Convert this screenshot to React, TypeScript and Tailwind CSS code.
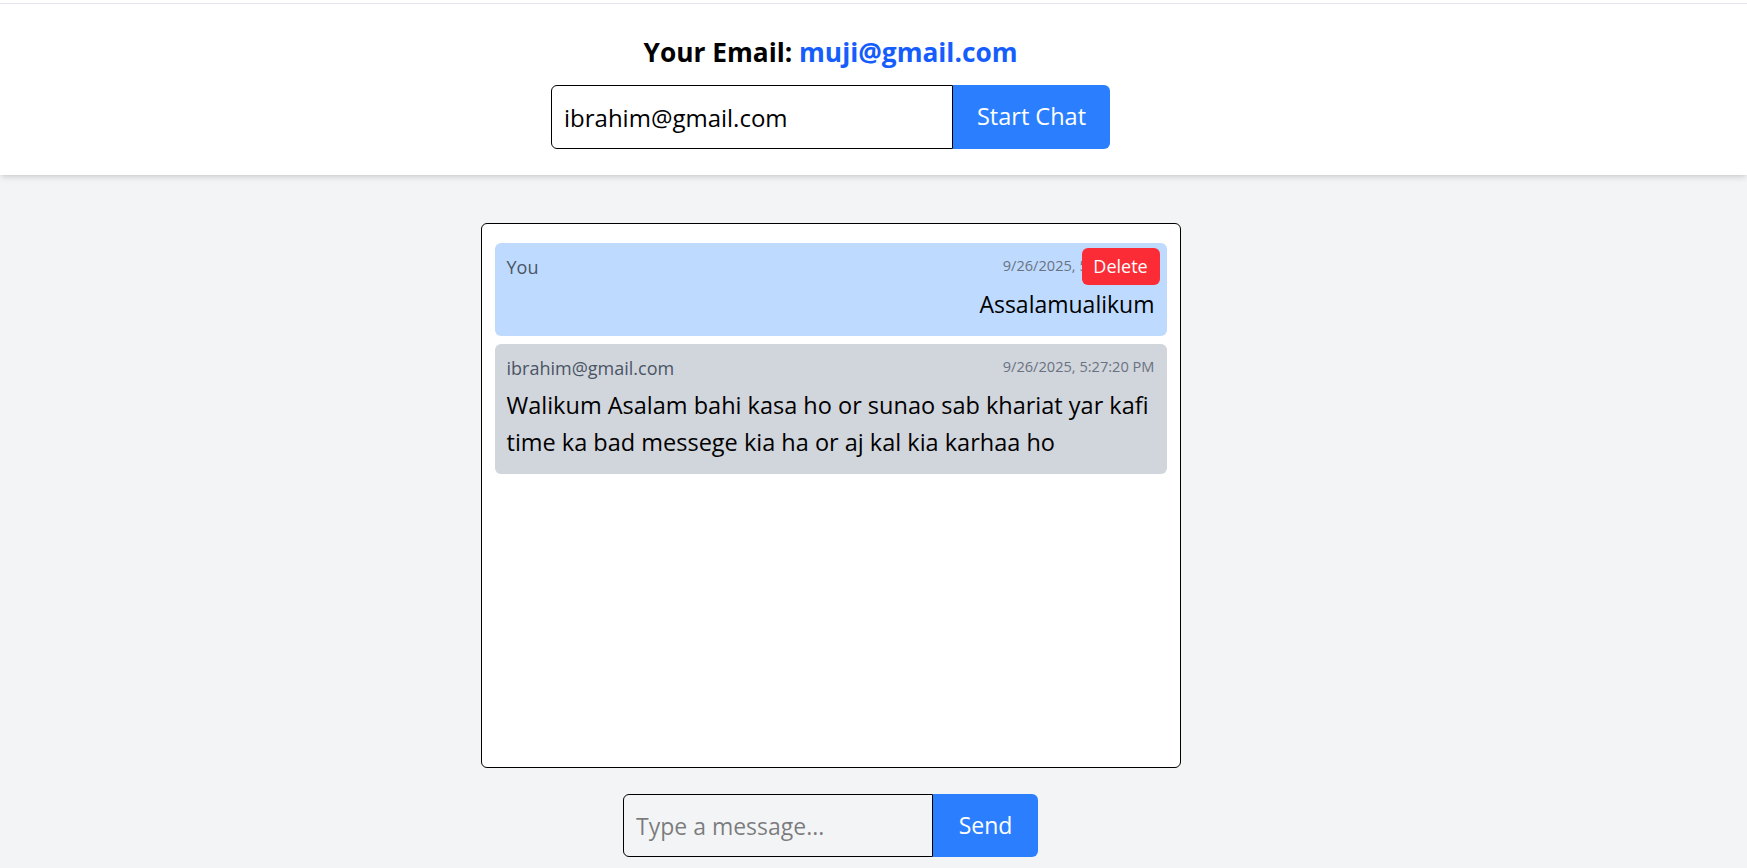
import React from "react";

export default function App() {
  return (
    <div className="min-h-screen bg-gray-100 font-['Open_Sans',sans-serif] text-black">
      <div className="h-[4px] bg-white border-b border-[#e7e7f3]" />
      <header className="h-[171px] bg-white shadow-md">
        <div className="w-[1661px] flex flex-col items-center pt-[32px]">
          <h2 className="text-[26.3px] leading-[32px] font-bold">
            Your Email: <span className="text-blue-600">muji@gmail.com</span>
          </h2>
          <div className="flex mt-[17px]">
            <input
              className="w-[402px] h-[64px] border border-black rounded-l-md px-3 text-[24px] bg-white outline-none"
              defaultValue="ibrahim@gmail.com"
            />
            <button className="w-[157px] h-[64px] bg-blue-500 text-white text-[23.5px] rounded-r-md">
              Start Chat
            </button>
          </div>
        </div>
      </header>
      <main className="w-[1661px] flex flex-col items-center pt-[48px]">
        <div className="w-[700px] h-[545px] bg-white border border-black rounded-md px-[13px] pt-[19px] flex flex-col gap-2">
          <div className="relative bg-blue-200 rounded-md p-3">
            <div className="flex justify-between">
              <span className="text-[18px] leading-6 text-gray-600">You</span>
              <span className="text-[14.6px] leading-5 text-gray-500">9/26/2025, 5:27:05 PM</span>
            </div>
            <p className="mt-[7px] text-[23px] leading-[37.5px] text-right">Assalamualikum</p>
            <button className="absolute top-[5px] right-[7px] w-[78px] h-[37px] bg-red-500 text-white text-[18px] rounded-md">
              Delete
            </button>
          </div>
          <div className="bg-gray-300 rounded-md p-3">
            <div className="flex justify-between">
              <span className="text-[18px] leading-6 text-gray-600">ibrahim@gmail.com</span>
              <span className="text-[14.6px] leading-5 text-gray-500">9/26/2025, 5:27:20 PM</span>
            </div>
            <p className="mt-[7px] text-[23.5px] leading-[37.5px]">
              Walikum Asalam bahi kasa ho or sunao sab khariat yar kafi time ka bad messege kia ha or aj kal kia karhaa ho
            </p>
          </div>
        </div>
        <div className="flex mt-[26px]">
          <input
            className="w-[310px] h-[63px] border border-black rounded-l-md px-3 text-[23px] bg-transparent outline-none"
            placeholder="Type a message..."
          />
          <button className="w-[105px] h-[63px] bg-blue-500 text-white text-[23px] rounded-r-md">
            Send
          </button>
        </div>
      </main>
    </div>
  );
}
